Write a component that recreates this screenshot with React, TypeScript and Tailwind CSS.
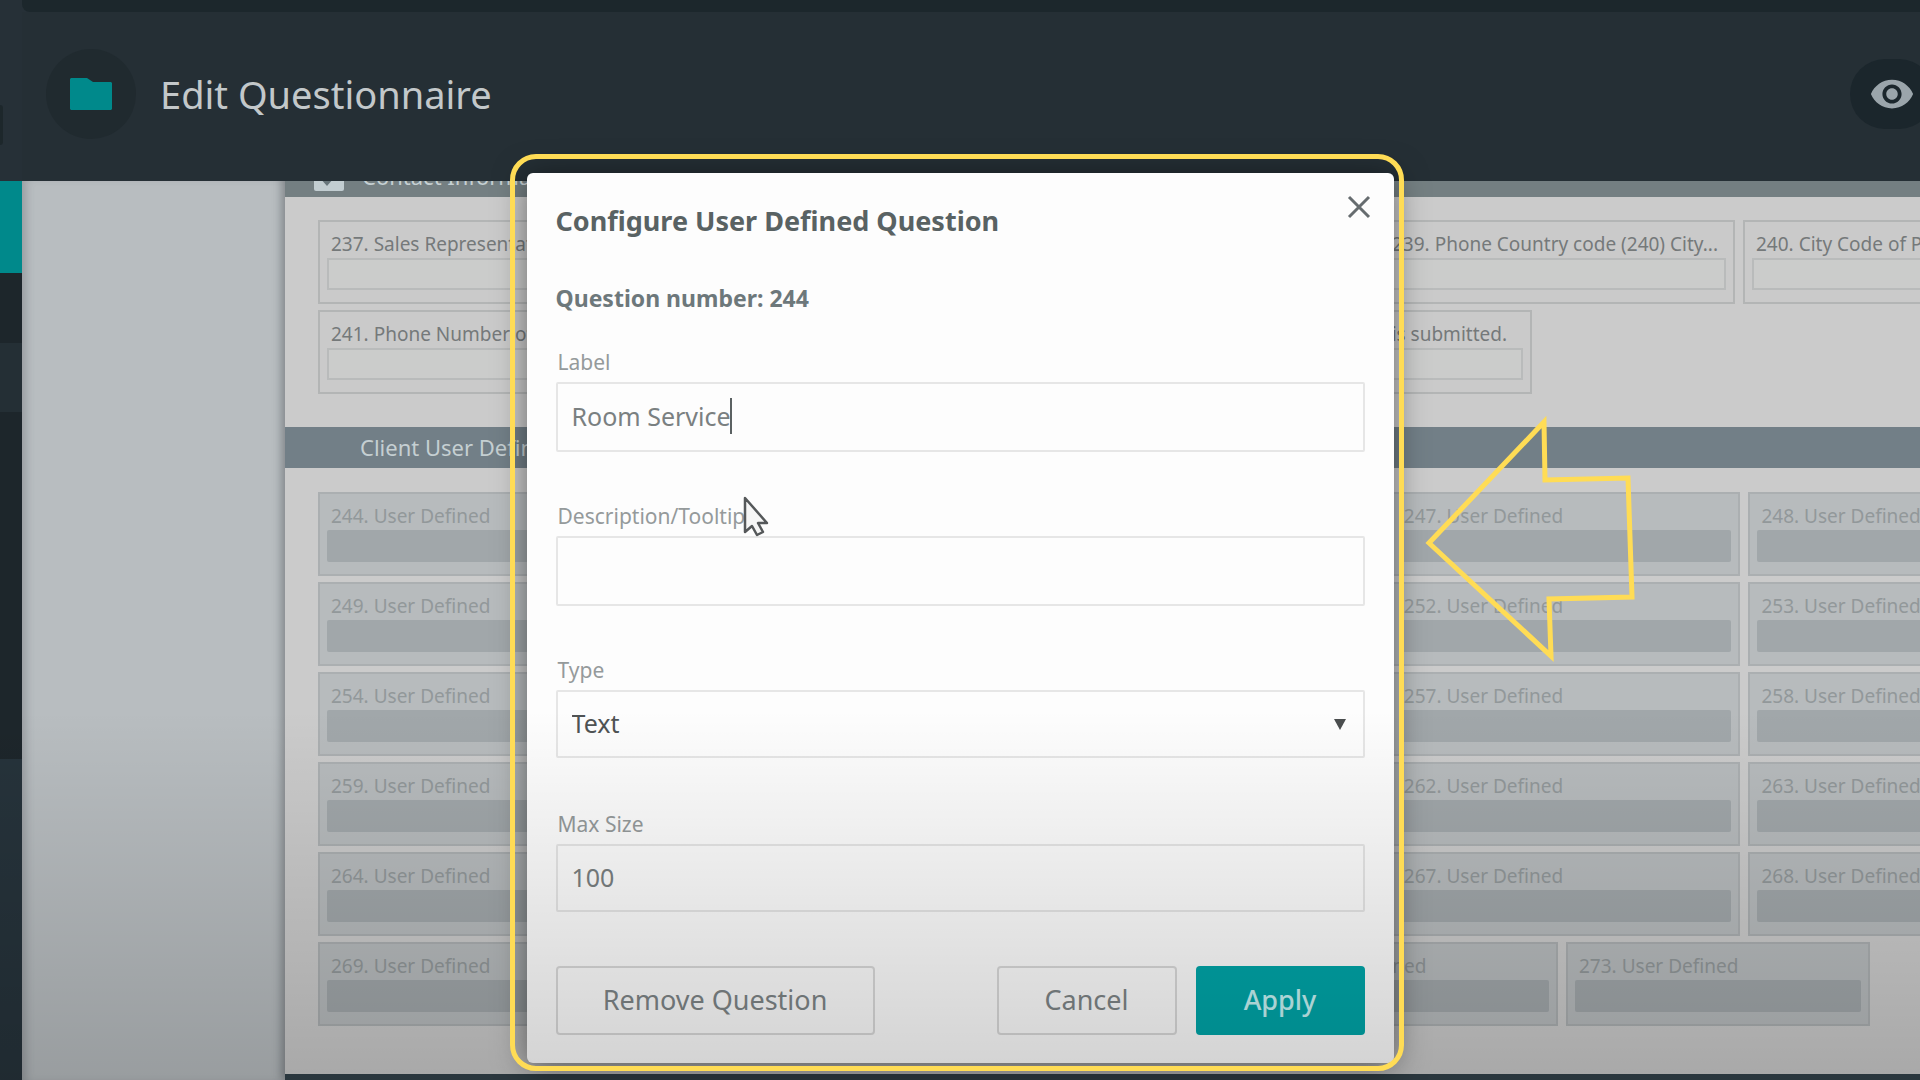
import React from "react";
import { MdVisibility } from "react-icons/md";

type QuestionProps = {
  id: number;
  text: string;
  muted?: boolean;
  alignEnd?: boolean;
};

function Question({ id, text, muted, alignEnd }: QuestionProps) {
  const inputId = `question-${id}`;
  return (
    <div
      className={`flex h-21 min-w-0 flex-col border-2 px-[7px] pt-2 ${
        muted ? "border-[#abafb1] bg-[#b7bbbd]" : "border-[#b3b5b5] bg-[#cacaca]"
      }`}
    >
      <label
        htmlFor={inputId}
        className={`truncate pl-1 text-[19px] leading-7 ${
          muted ? "text-[#92989a]" : "text-[#75797a]"
        } ${alignEnd ? "pr-4 text-right" : ""}`}
      >
        {id}. {text}
      </label>
      <input
        id={inputId}
        disabled={muted}
        className={`h-8 w-full px-2 text-base ${
          muted ? "rounded-xs bg-[#a1a7aa]" : "border-2 border-[#b9bbbb] bg-[#cbcccb]"
        }`}
      />
    </div>
  );
}

const definedIds = Array.from({ length: 25 }, (_, i) => 244 + i);
const lastRowIds = [269, 270, 271, 272, 273];

function FormPage() {
  return (
    <div className="mt-[-26px] flex-1 bg-[#cbcbcb] shadow-[-4px_0_8px_rgba(60,65,70,0.4)]">
      <section>
        <div className="flex h-[42px] items-center gap-[18px] bg-[#747f82] pl-[29px]">
          <span className="flex h-[30px] w-[30px] items-center justify-center rounded-xs bg-[#c2cdd1]">
            <svg viewBox="0 0 30 30" className="h-full w-full" fill="none" stroke="#68767b" strokeWidth="4">
              <path d="M6 14l7 8L25 8" />
            </svg>
          </span>
          <h2 className="text-[22px] leading-7 text-[#c5cfd2]">Contact Information</h2>
        </div>
        <div className="flex flex-col gap-1.5 pt-[23px] pb-[33px] pl-[33px]">
          <div className="grid w-[1773px] grid-cols-[348px_697px_356px_348px] gap-2">
            <Question id={237} text="Sales Representative" />
            <Question id={238} text="Sales Representative Email" />
            <Question id={239} text="Phone Country code (240) City..." />
            <Question id={240} text="City Code of Phone" />
          </div>
          <div className="grid w-[1214px] grid-cols-3 gap-2">
            <Question id={241} text="Phone Number of Contact" />
            <Question id={242} text="Email Address" />
            <Question id={243} text="Date the form is submitted." alignEnd />
          </div>
        </div>
      </section>
      <section>
        <div className="flex h-[41px] items-center bg-[#727f87] pb-0.5 pl-[75px]">
          <h2 className="text-[22px] leading-7 text-[#c5cfd2]">Client User Defined Questions</h2>
        </div>
        <div className="flex flex-col gap-1.5 pt-6 pb-12 pl-[33px]">
          <div className="grid w-[1780px] grid-cols-5 gap-x-2 gap-y-1.5">
            {definedIds.map((id) => (
              <Question key={id} id={id} text="User Defined" muted />
            ))}
          </div>
          <div className="grid w-[1552px] grid-cols-5 gap-2">
            {lastRowIds.map((id) => (
              <Question key={id} id={id} text="User Defined" muted />
            ))}
          </div>
        </div>
      </section>
      <div className="h-10 bg-[#33424a]" />
    </div>
  );
}

const fieldClass =
  "w-full rounded-xs border-2 border-[#e6e6e6] bg-transparent px-3.5 text-[25px] outline-none";
const labelClass = "block px-0.5 text-[21px] leading-7 text-[#959a9b]";

function ConfigureDialog() {
  return (
    <div
      role="dialog"
      aria-labelledby="dialog-title"
      className="relative z-20 w-[867px] rounded-md bg-[#fdfdfd] px-[29px] pt-8 pb-7 shadow-[0_4px_32px_rgba(0,0,0,0.5)]"
    >
      <button aria-label="Close" className="absolute top-[22px] right-[23px]">
        <svg viewBox="0 0 24 24" className="h-6 w-6" fill="none" stroke="#666c6f" strokeWidth="3">
          <path d="M2 2l20 20M22 2L2 22" />
        </svg>
      </button>
      <h2 id="dialog-title" className="text-[27px] leading-8 font-bold text-[#596263]">
        Configure User Defined Question
      </h2>
      <p className="mt-[45px] text-[23px] leading-8 font-bold text-[#6d787b]">Question number: 244</p>
      <form className="mt-[34px] flex flex-col" onSubmit={(e) => e.preventDefault()}>
        <div className="relative">
          <label htmlFor="label" className={labelClass}>Label</label>
          <input
            id="label"
            defaultValue="Room Service"
            className={`${fieldClass} mt-1.5 h-[70px] pb-0.5 text-[#7a8081]`}
          />
          <span className="absolute top-[50px] left-[174px] h-9 w-0.5 bg-[#5b6162]" />
        </div>
        <div className="relative mt-[50px]">
          <label htmlFor="description" className={labelClass}>Description/Tooltip</label>
          <input id="description" className={`${fieldClass} mt-1.5 h-[70px] pb-0.5 text-[#7a8081]`} />
          <svg viewBox="0 0 27 42" className="absolute top-[-7px] left-[187px] h-[42px] w-[27px]">
            <path
              d="M2 3v34l7-6 5 9 6-3-5-9h9z"
              fill="#f6f6f6"
              stroke="#55585a"
              strokeWidth="2.5"
              strokeLinejoin="round"
            />
          </svg>
        </div>
        <div className="relative mt-[50px]">
          <label htmlFor="type" className={labelClass}>Type</label>
          <select id="type" className={`${fieldClass} mt-1.5 h-[68px] appearance-none text-[#4f5354]`}>
            <option>Text</option>
          </select>
          <svg viewBox="0 0 12 11" className="absolute right-[19px] bottom-7 h-[11px] w-3" fill="#4a4d4e">
            <path d="M0 0h12L6 11z" />
          </svg>
        </div>
        <div className="mt-[52px]">
          <label htmlFor="max-size" className={labelClass}>Max Size</label>
          <input
            id="max-size"
            defaultValue="100"
            className={`${fieldClass} mt-1.5 h-[68px] pb-0.5 text-[#7a8081]`}
          />
        </div>
        <div className="mt-[54px] flex gap-[19px] text-[27px]">
          <button
            type="button"
            className="mr-auto h-[69px] w-[319px] rounded-sm border-2 border-[#dadada] text-[#7e8587]"
          >
            Remove Question
          </button>
          <button
            type="button"
            className="h-[69px] w-[180px] rounded-sm border-2 border-[#dadada] text-[#7e8587]"
          >
            Cancel
          </button>
          <button type="submit" className="h-[69px] w-[169px] rounded-sm bg-[#00a5a8] font-medium text-[#c5f3f4]">
            Apply
          </button>
        </div>
      </form>
    </div>
  );
}

export default function App() {
  return (
    <div className="relative flex h-screen overflow-hidden bg-[#263037] font-['Noto_Sans',sans-serif]">
      <aside className="flex w-[22px] shrink-0 flex-col bg-[#1d262b]">
        <div className="flex h-[181px] items-end bg-[#263037] pb-9">
          <span className="h-10 w-[3px] rounded-r-full bg-[#1d272b]" />
        </div>
        <div className="h-[92px] bg-[#00898b]" />
        <div className="mt-[70px] h-[69px] bg-[#242f35]" />
        <div className="mt-[347px] flex-1 bg-[#26333b]" />
      </aside>

      <div className="flex min-w-0 flex-1 flex-col">
        <div className="h-3 shrink-0 rounded-bl-lg bg-[#1c272c]" />
        <header className="relative z-10 flex h-[169px] shrink-0 items-center bg-[#252f35] pb-1.5 pl-6">
          <span className="flex h-[90px] w-[90px] shrink-0 items-center justify-center rounded-full bg-[#202a2f]">
            <svg viewBox="0 0 42 32" className="h-8 w-[42px]" fill="#00898b">
              <path d="M1 0h16l6 4h18l1 1v26l-1 1H1l-1-1V1z" />
            </svg>
          </span>
          <h1 className="ml-6 text-[38px] leading-12 text-[#c3c8ca]">Edit Questionnaire</h1>
          <button
            aria-label="Preview"
            className="mr-[-14px] ml-auto flex h-[70px] w-[84px] items-center justify-center rounded-full bg-[#1b262c]"
          >
            <MdVisibility className="h-[46px] w-[46px] text-[#9ba5ab]" />
          </button>
        </header>
        <main className="flex min-h-0 flex-1 overflow-hidden bg-[#b8bdc0] pl-[263px] shadow-[inset_8px_0_8px_-4px_rgba(80,85,90,0.3)]">
          <FormPage />
        </main>
      </div>

      <div className="absolute inset-0 flex items-start justify-center pt-[173px]">
        <div className="relative">
          <ConfigureDialog />
          <div className="pointer-events-none absolute -top-[19px] -right-[10px] -bottom-2 -left-[17px] z-30 rounded-[26px] border-5 border-[#ffdc55]" />
          <svg
            viewBox="0 0 214 252"
            className="pointer-events-none absolute top-[239px] left-[896px] z-30 h-[252px] w-[214px]"
            fill="none"
            stroke="#ffdc55"
            strokeWidth="5"
          >
            <path d="M121 10l1 58 83-2 4 119-83 2 2 57L6 131z" />
          </svg>
        </div>
      </div>

      <div className="pointer-events-none absolute inset-x-0 bottom-0 z-20 h-[370px] bg-linear-to-b from-transparent to-black/17" />
    </div>
  );
}
